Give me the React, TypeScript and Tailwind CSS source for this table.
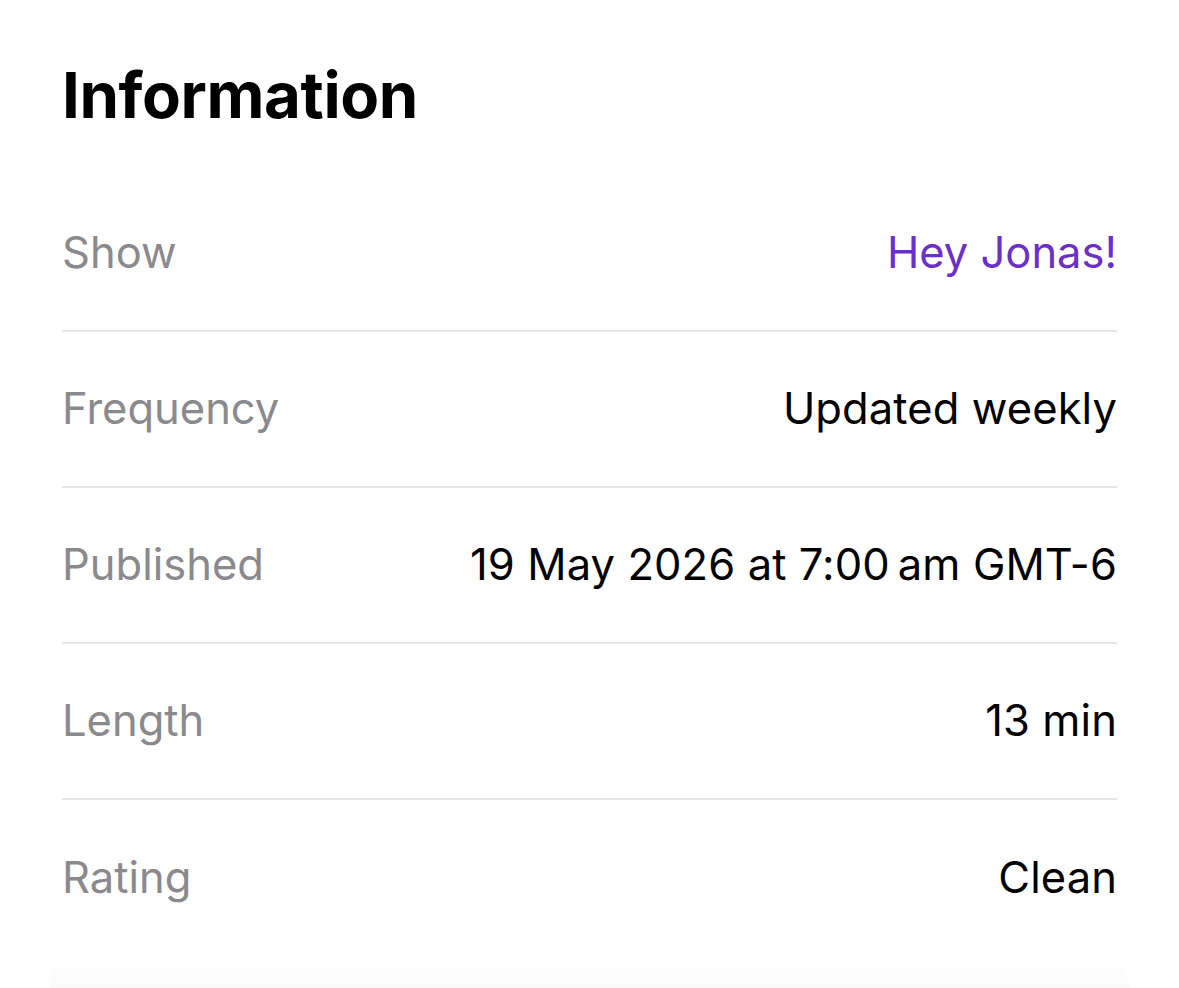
import React from "react";

const rows = [
  { label: "Show", value: "Hey Jonas!", accent: true },
  { label: "Frequency", value: "Updated weekly" },
  { label: "Published", value: "19 May 2026 at 7:00\u2009am GMT-6" },
  { label: "Length", value: "13 min" },
  { label: "Rating", value: "Clean" },
];

const App = () => {
  return (
    <div
      className="relative h-[988px] w-[1179px] overflow-hidden bg-white"
      style={{ fontFamily: "Inter, 'Noto Sans', sans-serif" }}
    >
      <div className="px-[62px]">
        <h1 className="pt-[52px] text-[63.5px] font-bold leading-[86px] tracking-[-0.4px] text-black">
          Information
        </h1>
        <div className="mt-[38px]">
          {rows.map((row, i) => (
            <div
              key={row.label}
              className={
                i === rows.length - 1
                  ? "flex h-[156px] items-center justify-between"
                  : "flex h-[156px] items-center justify-between border-b-2 border-[#e5e5e7]"
              }
            >
              <span className="text-[43.5px] text-[#8a8a8e]">{row.label}</span>
              <span
                className={
                  row.accent
                    ? "text-[43.5px] text-[#6b30c7]"
                    : "text-[43.5px] tracking-[0.1px] text-black"
                }
              >
                {row.value}
              </span>
            </div>
          ))}
        </div>
      </div>
      <div className="absolute bottom-0 left-[50px] right-[50px] h-[34px] rounded-t-[40px] bg-gradient-to-b from-white to-[#fbfbfb]" />
    </div>
  );
};

export default App;
